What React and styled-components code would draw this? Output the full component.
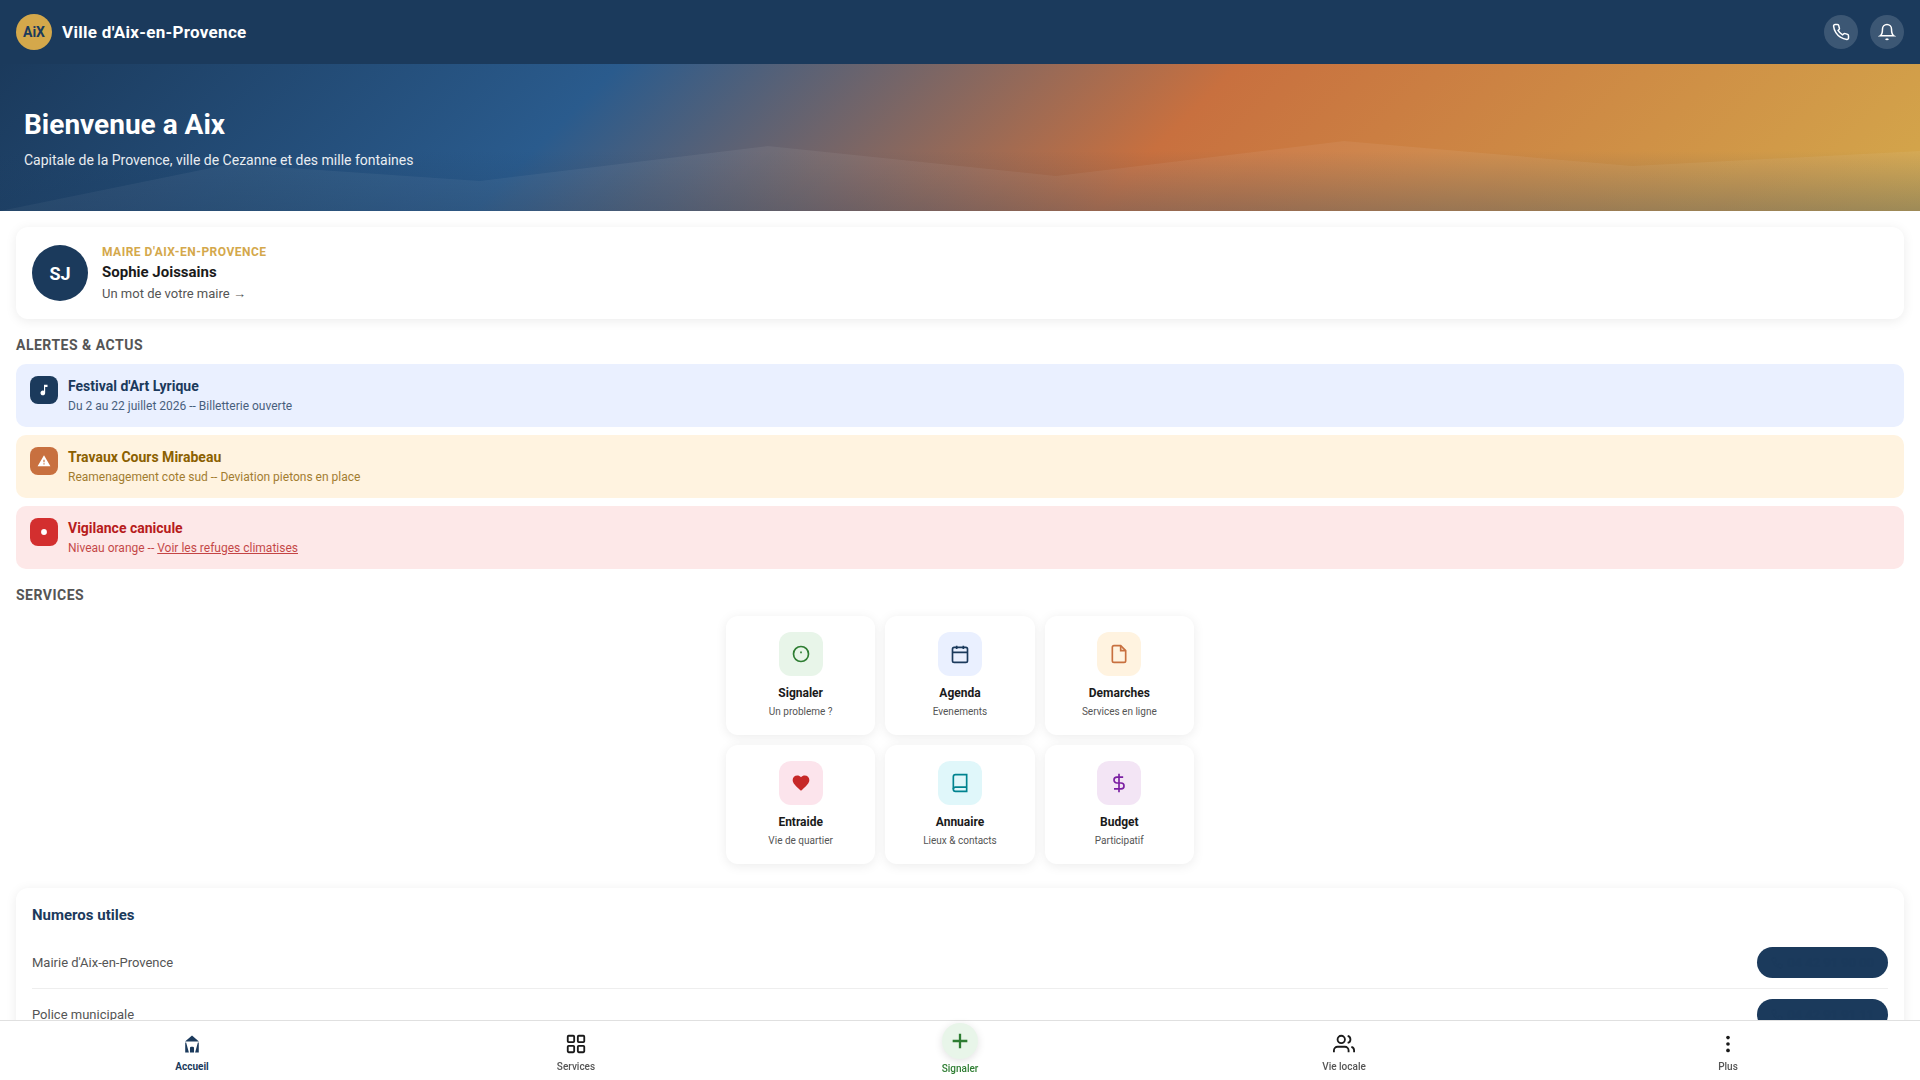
import React from 'react';
import styled, { createGlobalStyle } from 'styled-components';

const GlobalStyle = createGlobalStyle`
  :root {
    --blue: #1b3a5c;
    --gold: #d4a84b;
    --text: #1a1a1a;
    --muted: #555;
  }

  * {
    margin: 0;
    padding: 0;
    box-sizing: border-box;
  }

  body {
    font-family: Roboto, 'Liberation Sans', sans-serif;
    background: #fff;
    color: var(--text);
  }
`;

const Icon = ({ size, stroke = 2, children }) => (
  <svg
    width={size}
    height={size}
    viewBox="0 0 24 24"
    fill="none"
    stroke="currentColor"
    strokeWidth={stroke}
    aria-hidden="true"
  >
    {children}
  </svg>
);

const phonePath = (
  <path d="M22 16.92v3a2 2 0 0 1-2.18 2 19.79 19.79 0 0 1-8.63-3.07 19.5 19.5 0 0 1-6-6 19.79 19.79 0 0 1-3.07-8.67A2 2 0 0 1 4.11 2h3a2 2 0 0 1 2 1.72 12.84 12.84 0 0 0 .7 2.81 2 2 0 0 1-.45 2.11L8.09 9.91a16 16 0 0 0 6 6l1.27-1.27a2 2 0 0 1 2.11-.45 12.84 12.84 0 0 0 2.81.7A2 2 0 0 1 22 16.92z" />
);

const bellPath = (
  <>
    <path d="M18 8A6 6 0 0 0 6 8c0 7-3 9-3 9h18s-3-2-3-9" />
    <path d="M13.73 21a2 2 0 0 1-3.46 0" />
  </>
);

const alerts = [
  {
    id: 'festival',
    title: "Festival d'Art Lyrique",
    text: 'Du 2 au 22 juillet 2026 -- Billetterie ouverte',
    bg: '#eaf0ff',
    color: '#1b3a5c',
    iconBg: '#1b3a5c',
    icon: <path d="M12 3v10.55c-.59-.34-1.27-.55-2-.55-2.21 0-4 1.79-4 4s1.79 4 4 4 4-1.79 4-4V7h4V3h-6z" />,
  },
  {
    id: 'travaux',
    title: 'Travaux Cours Mirabeau',
    text: 'Reamenagement cote sud -- Deviation pietons en place',
    bg: '#fff3e0',
    color: '#8b6000',
    iconBg: '#c8703f',
    icon: <path d="M1 21h22L12 2 1 21zm12-3h-2v-2h2v2zm0-4h-2v-4h2v4z" />,
  },
  {
    id: 'canicule',
    title: 'Vigilance canicule',
    text: 'Niveau orange -- ',
    link: 'Voir les refuges climatises',
    bg: '#fde8e8',
    color: '#b71c1c',
    iconBg: '#d32f2f',
    icon: <circle cx="12" cy="12" r="5" />,
  },
];

const services = [
  {
    name: 'Signaler',
    desc: 'Un probleme ?',
    bg: '#e8f5e9',
    color: '#2e7d32',
    icon: (
      <>
        <circle cx="12" cy="12" r="9" />
        <path d="M12 9v2" />
      </>
    ),
  },
  {
    name: 'Agenda',
    desc: 'Evenements',
    bg: '#eaf0ff',
    color: '#1b3a5c',
    icon: (
      <>
        <rect x="3" y="4" width="18" height="18" rx="2" />
        <path d="M16 2v4M8 2v4M3 10h18" />
      </>
    ),
  },
  {
    name: 'Demarches',
    desc: 'Services en ligne',
    bg: '#fff3e0',
    color: '#c8703f',
    icon: (
      <>
        <path d="M14 2H6a2 2 0 0 0-2 2v16a2 2 0 0 0 2 2h12a2 2 0 0 0 2-2V8z" />
        <path d="M14 2v6h6" />
      </>
    ),
  },
  {
    name: 'Entraide',
    desc: 'Vie de quartier',
    bg: '#fce4ec',
    color: '#c62828',
    icon: (
      <path
        fill="currentColor"
        stroke="none"
        d="M12 21.35l-1.45-1.32C5.4 15.36 2 12.28 2 8.5 2 5.42 4.42 3 7.5 3c1.74 0 3.41.81 4.5 2.09C13.09 3.81 14.76 3 16.5 3 19.58 3 22 5.42 22 8.5c0 3.78-3.4 6.86-8.55 11.54L12 21.35z"
      />
    ),
  },
  {
    name: 'Annuaire',
    desc: 'Lieux & contacts',
    bg: '#e0f7fa',
    color: '#00838f',
    icon: (
      <>
        <path d="M4 19.5A2.5 2.5 0 0 1 6.5 17H20" />
        <path d="M6.5 2H20v20H6.5A2.5 2.5 0 0 1 4 19.5v-15A2.5 2.5 0 0 1 6.5 2z" />
      </>
    ),
  },
  {
    name: 'Budget',
    desc: 'Participatif',
    bg: '#f3e5f5',
    color: '#7b1fa2',
    icon: <path d="M12 1v22M17 5H9.5a3.5 3.5 0 0 0 0 7h5a3.5 3.5 0 0 1 0 7H6" />,
  },
];

const numbers = [
  { label: "Mairie d'Aix-en-Provence", phone: '04 42 91 90 00' },
  { label: 'Police municipale', phone: '04 42 91 91 11' },
];

const navItems = [
  {
    label: 'Accueil',
    active: true,
    icon: (
      <g fill="currentColor" stroke="none">
        <path d="M12 2.6L4.4 9.4h15.2z" />
        <path d="M4.6 10.4h1L8.6 21.2h-4zM19.4 10.4h-1L15.4 21.2h4z" />
        <path d="M9.8 21.2v-4.8a1.4 1.4 0 0 1 1.4-1.4h1.6a1.4 1.4 0 0 1 1.4 1.4v4.8z" />
      </g>
    ),
  },
  {
    label: 'Services',
    icon: (
      <>
        <rect x="3" y="3" width="7" height="7" rx="1" />
        <rect x="14" y="3" width="7" height="7" rx="1" />
        <rect x="3" y="14" width="7" height="7" rx="1" />
        <rect x="14" y="14" width="7" height="7" rx="1" />
      </>
    ),
  },
  { label: 'Signaler', report: true, icon: <path d="M12 4v16M4 12h16" /> },
  {
    label: 'Vie locale',
    icon: (
      <>
        <path d="M17 21v-2a4 4 0 0 0-4-4H5a4 4 0 0 0-4 4v2" />
        <circle cx="9" cy="7" r="4" />
        <path d="M23 21v-2a4 4 0 0 0-3-3.87M16 3.13a4 4 0 0 1 0 7.75" />
      </>
    ),
  },
  {
    label: 'Plus',
    icon: (
      <g fill="currentColor" stroke="none">
        <circle cx="12" cy="5" r="2" />
        <circle cx="12" cy="12" r="2" />
        <circle cx="12" cy="19" r="2" />
      </g>
    ),
  },
];

const App = () => {
  return (
    <>
      <GlobalStyle />
      <Header>
        <Brand>
          <Logo>AiX</Logo>
          <BrandName>Ville d'Aix-en-Provence</BrandName>
        </Brand>
        <HeaderActions>
          <RoundButton aria-label="Appeler">
            <Icon size={18}>{phonePath}</Icon>
          </RoundButton>
          <RoundButton aria-label="Notifications">
            <Icon size={18}>{bellPath}</Icon>
          </RoundButton>
        </HeaderActions>
      </Header>

      <Hero>
        <h1>Bienvenue a Aix</h1>
        <p>Capitale de la Provence, ville de Cezanne et des mille fontaines</p>
      </Hero>

      <Main>
        <MayorCard href="#maire">
          <Avatar>SJ</Avatar>
          <div>
            <MayorRole>Maire d'Aix-en-Provence</MayorRole>
            <MayorName>Sophie Joissains</MayorName>
            <MayorText>Un mot de votre maire →</MayorText>
          </div>
        </MayorCard>

        <SectionTitle>Alertes &amp; Actus</SectionTitle>
        <AlertList>
          {alerts.map((item) => (
            <Alert key={item.id} $bg={item.bg} $color={item.color}>
              <AlertIcon $bg={item.iconBg}>
                <svg width="14" height="14" viewBox="0 0 24 24" fill="#fff" aria-hidden="true">
                  {item.icon}
                </svg>
              </AlertIcon>
              <div>
                <h3>{item.title}</h3>
                <p>
                  {item.text}
                  {item.link && <a href="#refuges">{item.link}</a>}
                </p>
              </div>
            </Alert>
          ))}
        </AlertList>

        <SectionTitle>Services</SectionTitle>
        <ServiceGrid>
          {services.map((item) => (
            <ServiceCard key={item.name}>
              <ServiceIcon $bg={item.bg} $color={item.color}>
                <Icon size={20}>{item.icon}</Icon>
              </ServiceIcon>
              <ServiceName>{item.name}</ServiceName>
              <ServiceDesc>{item.desc}</ServiceDesc>
            </ServiceCard>
          ))}
        </ServiceGrid>

        <NumbersCard>
          <h2>Numeros utiles</h2>
          <ul>
            {numbers.map((item) => (
              <NumberRow key={item.label}>
                <span>{item.label}</span>
                <PhoneLink href={`tel:${item.phone.replace(/ /g, '')}`}>
                  <Icon size={12}>{phonePath}</Icon>
                  {item.phone}
                </PhoneLink>
              </NumberRow>
            ))}
          </ul>
        </NumbersCard>
      </Main>

      <BottomNav>
        {navItems.map((item) => (
          <NavButton key={item.label} $active={item.active} $report={item.report}>
            {item.report ? (
              <ReportCircle>
                <Icon size={22} stroke={2.5}>{item.icon}</Icon>
              </ReportCircle>
            ) : (
              <Icon size={22}>{item.icon}</Icon>
            )}
            <span>{item.label}</span>
          </NavButton>
        ))}
      </BottomNav>
    </>
  );
};

const Header = styled.header`
  display: flex;
  justify-content: space-between;
  align-items: center;
  height: 64px;
  padding: 0 16px;
  background: var(--blue);
  color: #fff;
`;

const Brand = styled.div`
  display: flex;
  align-items: center;
  gap: 10px;
`;

const Logo = styled.div`
  display: flex;
  align-items: center;
  justify-content: center;
  width: 36px;
  height: 36px;
  border-radius: 50%;
  background: var(--gold);
  color: var(--blue);
  font-size: 14px;
  font-weight: 700;
`;

const BrandName = styled.span`
  font-size: 17px;
  font-weight: 700;
  line-height: 25px;
  letter-spacing: 0.3px;
`;

const HeaderActions = styled.div`
  display: flex;
  gap: 12px;
`;

const RoundButton = styled.button`
  display: flex;
  align-items: center;
  justify-content: center;
  width: 34px;
  height: 34px;
  border: none;
  border-radius: 50%;
  background: rgba(255, 255, 255, 0.15);
  color: #fff;
  cursor: pointer;
`;

const Hero = styled.section`
  position: relative;
  padding: 40px 24px;
  background: linear-gradient(135deg, #1b3a5c 0%, #2a5b8d 30%, #c8703f 60%, #d4a84b 100%);
  color: #fff;

  /* mountain ridge and the shade at its foot */
  &::before,
  &::after {
    content: '';
    position: absolute;
    left: 0;
    right: 0;
    bottom: 0;
  }

  &::before {
    height: 100px;
    background: rgba(255, 255, 255, 0.06);
    clip-path: polygon(0 100%, 12% 53%, 25% 70%, 40% 35%, 55% 65%, 70% 30%, 85% 55%, 100% 40%, 100% 100%);
  }

  &::after {
    height: 60px;
    background: linear-gradient(to top, rgba(27, 58, 92, 0.3), transparent);
  }

  h1 {
    position: relative;
    z-index: 1;
    margin-bottom: 4px;
    font-size: 28px;
    font-weight: 700;
    line-height: 42px;
  }

  p {
    position: relative;
    z-index: 1;
    font-size: 14px;
    line-height: 21px;
    opacity: 0.9;
  }
`;

const Main = styled.main`
  padding: 16px 16px 76px;
`;

const MayorCard = styled.a`
  display: flex;
  align-items: center;
  gap: 14px;
  padding: 16px;
  border-radius: 12px;
  background: #fff;
  box-shadow: 0 2px 12px rgba(0, 0, 0, 0.08);
  color: inherit;
  text-decoration: none;
`;

const Avatar = styled.div`
  display: flex;
  align-items: center;
  justify-content: center;
  width: 56px;
  height: 56px;
  border-radius: 50%;
  background: var(--blue);
  color: #fff;
  font-size: 18px;
  font-weight: 700;
`;

const MayorRole = styled.p`
  color: var(--gold);
  font-size: 12px;
  font-weight: 700;
  line-height: 18px;
  letter-spacing: 0.5px;
  text-transform: uppercase;
`;

const MayorName = styled.p`
  font-size: 15px;
  font-weight: 700;
  line-height: 23px;
`;

const MayorText = styled.p`
  color: var(--muted);
  font-size: 13px;
  line-height: 19px;
`;

const SectionTitle = styled.h2`
  margin: 16px 0 8px;
  color: var(--muted);
  font-size: 14px;
  font-weight: 700;
  line-height: 21px;
  letter-spacing: 0.5px;
  text-transform: uppercase;
`;

const AlertList = styled.div`
  display: flex;
  flex-direction: column;
  gap: 8px;
`;

const Alert = styled.article`
  display: flex;
  gap: 10px;
  padding: 12px 14px;
  border-radius: 10px;
  background: ${(props) => props.$bg};
  color: ${(props) => props.$color};

  h3 {
    font-size: 14px;
    font-weight: 700;
    line-height: 21px;
  }

  p {
    font-size: 12px;
    line-height: 18px;
    opacity: 0.8;
  }

  a {
    color: inherit;
  }
`;

const AlertIcon = styled.div`
  display: flex;
  align-items: center;
  justify-content: center;
  width: 28px;
  height: 28px;
  border-radius: 8px;
  background: ${(props) => props.$bg};
`;

const ServiceGrid = styled.div`
  display: grid;
  grid-template-columns: repeat(3, 1fr);
  gap: 10px;
  max-width: 468px;
  margin: 10px auto 24px;
`;

const ServiceCard = styled.button`
  display: flex;
  flex-direction: column;
  align-items: center;
  padding: 16px 8px;
  border: none;
  border-radius: 12px;
  background: #fff;
  box-shadow: 0 2px 12px rgba(0, 0, 0, 0.08);
  color: var(--text);
  font-family: inherit;
  cursor: pointer;
`;

const ServiceIcon = styled.span`
  display: flex;
  align-items: center;
  justify-content: center;
  width: 44px;
  height: 44px;
  margin-bottom: 8px;
  border-radius: 12px;
  background: ${(props) => props.$bg};
  color: ${(props) => props.$color};
`;

const ServiceName = styled.span`
  font-size: 12px;
  font-weight: 700;
  line-height: 18px;
`;

const ServiceDesc = styled.span`
  margin-top: 2px;
  color: var(--muted);
  font-size: 10px;
  line-height: 15px;
`;

const NumbersCard = styled.section`
  padding: 16px;
  border-radius: 12px;
  background: #fff;
  box-shadow: 0 2px 12px rgba(0, 0, 0, 0.08);

  h2 {
    margin-bottom: 10px;
    color: var(--blue);
    font-size: 15px;
    font-weight: 700;
    line-height: 23px;
  }

  ul {
    list-style: none;
  }
`;

const NumberRow = styled.li`
  display: flex;
  justify-content: space-between;
  align-items: center;
  padding: 10px 0;
  border-bottom: 1px solid #eee;
  color: var(--muted);
  font-size: 13px;
  line-height: 20px;
`;

const PhoneLink = styled.a`
  display: flex;
  align-items: center;
  gap: 4px;
  padding: 6px 14px;
  border-radius: 20px;
  background: var(--blue);
  color: #1a395b;
  font-size: 13px;
  font-weight: 500;
  line-height: 19px;
  text-decoration: none;
`;

const BottomNav = styled.nav`
  position: fixed;
  left: 0;
  right: 0;
  bottom: 0;
  z-index: 10;
  display: flex;
  height: 60px;
  border-top: 1px solid #e0e0e0;
  background: #fff;
`;

const NavButton = styled.button`
  flex: 1;
  display: flex;
  flex-direction: column;
  align-items: center;
  gap: ${(props) => (props.$report ? '2px' : '4px')};
  padding-top: ${(props) => (props.$report ? '2px' : '12px')};
  border: none;
  background: none;
  color: ${(props) => (props.$active ? 'var(--blue)' : 'var(--text)')};
  font-family: inherit;
  cursor: pointer;

  span {
    color: ${(props) => (props.$report ? '#2e7d32' : props.$active ? 'var(--blue)' : 'var(--muted)')};
    font-size: 10px;
    font-weight: ${(props) => (props.$active ? 700 : 500)};
    line-height: 15px;
  }
`;

const ReportCircle = styled.div`
  display: flex;
  align-items: center;
  justify-content: center;
  width: 36px;
  height: 36px;
  border-radius: 50%;
  background: #e8f5e9;
  box-shadow: 0 2px 8px rgba(0, 0, 0, 0.12);
  color: #2e7d32;
`;

export default App;
